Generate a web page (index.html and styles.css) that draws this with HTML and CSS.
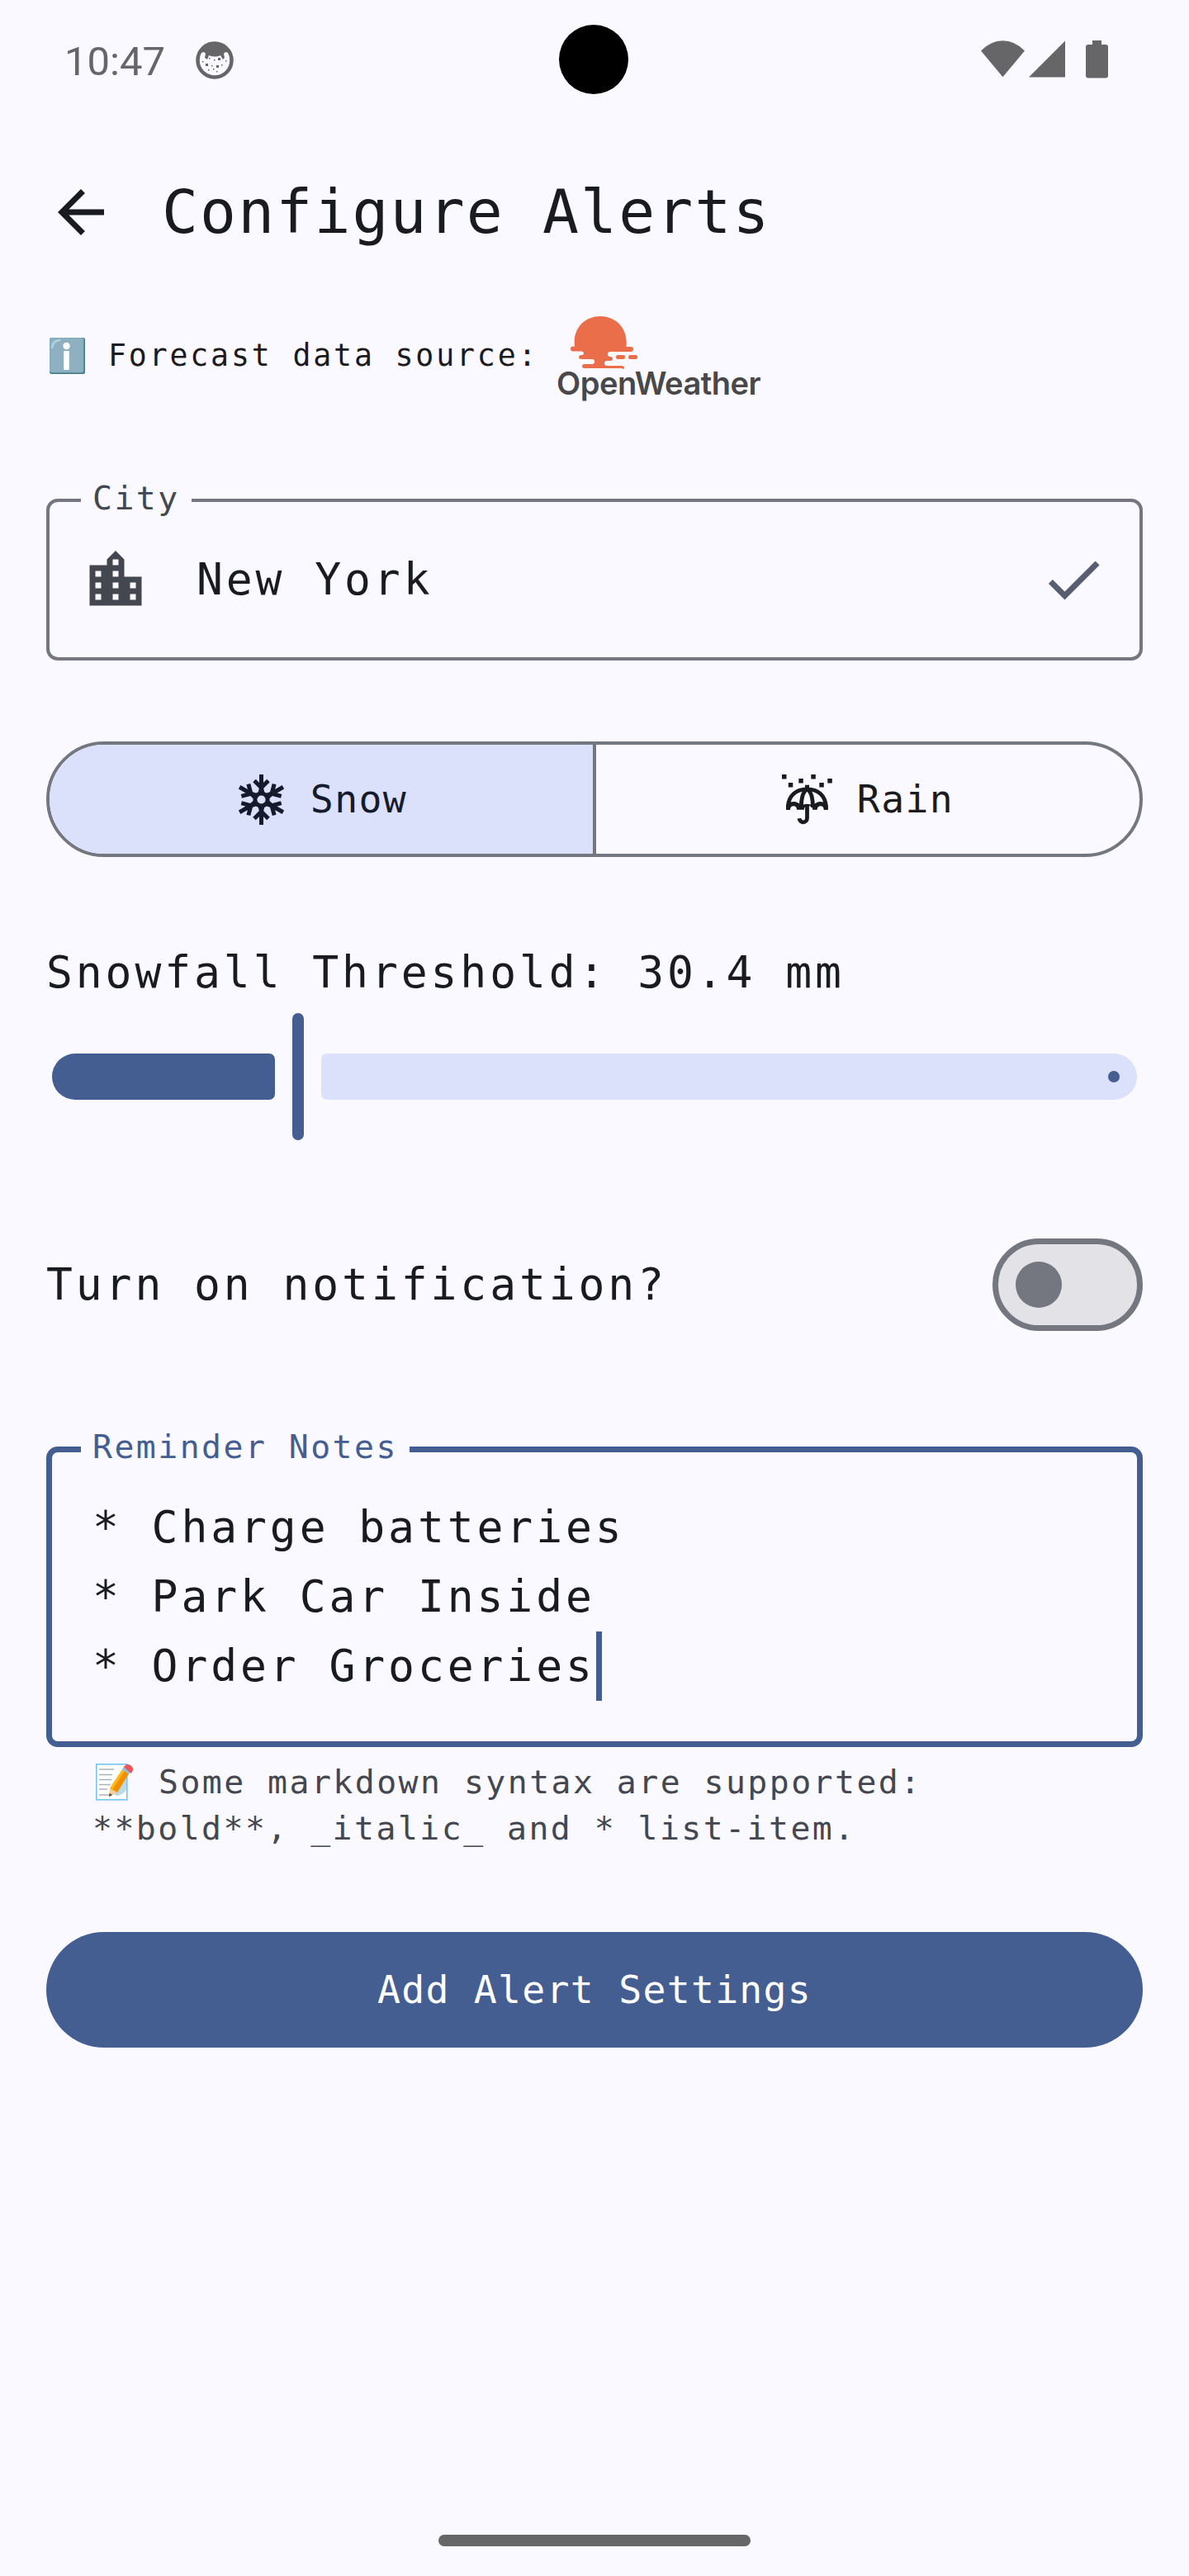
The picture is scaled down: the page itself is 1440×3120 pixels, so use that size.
FILE: index.html
```html
<!DOCTYPE html>
<html lang="en">
<head>
<meta charset="utf-8">
<title>Configure Alerts</title>
<link rel="stylesheet" href="styles.css">
</head>
<body>
<div class="screen">
  <header class="status">
    <span class="clock">10:47</span>
    <svg class="cookie" width="46" height="46" viewBox="0 0 46 46">
      <circle cx="23" cy="23" r="20.5" fill="none" stroke="#666668" stroke-width="4.5"/>
      <path d="M6 14C9 5 15 2 23 2s14 3 17 12l-4-1-2 2 1 5-2 2-3-5c-4 2-10 2-14 0l-2 5-3-2 1-5-2-2z" fill="#666668"/>
      <g fill="#666668"><rect x="12" y="27" width="3" height="3"/><rect x="27" y="20" width="3" height="3"/><rect x="25" y="29" width="3" height="3"/><rect x="8" y="24" width="1.5" height="1.5"/><rect x="16" y="20" width="1.5" height="1.5"/><rect x="22" y="22" width="1.5" height="1.5"/><rect x="19" y="29" width="1.5" height="1.5"/><rect x="31" y="28" width="1.5" height="1.5"/><rect x="36" y="23" width="1.5" height="1.5"/><rect x="15" y="34" width="1.5" height="1.5"/><rect x="21" y="33" width="1.5" height="1.5"/><rect x="25" y="36" width="1.5" height="1.5"/></g>
    </svg>
    <span class="camera"></span>
    <svg class="signals" width="156" height="48" viewBox="0 0 156 48" fill="#666668">
      <path d="M0 12.4Q12 .2 26.5.2T53 12.4L26.5 44.3z"/>
      <path d="M58 44.5L102 .5v44z"/>
      <path d="M135 0h11v5h5q3 0 3 3v34.500q0 3-3 3h-21q-3 0-3-3V8q0-3 3-3h5z"/>
    </svg>
  </header>

  <div class="appbar">
    <svg width="84" height="84" viewBox="0 0 24 24" fill="#1a1b20"><path d="M20 11H7.83l5.590-5.590L12 4l-8 8 8 8 1.410-1.410L7.830 13H20z"/></svg>
    <h1>Configure Alerts</h1>
  </div>

  <main>
    <div class="source">
      <svg class="info" width="43" height="44" viewBox="0 0 43 44">
        <rect width="43" height="44" rx="2.500" fill="#427687"/><rect width="41.500" height="42.500" rx="2.500" fill="#82aebf"/><rect x="1.500" y="1.500" width="38.500" height="39.500" rx="2" fill="#8fb0c0"/>
        <path d="M3 12Q4 4 12 3" stroke="#b2d2e0" stroke-width="2.500" fill="none" stroke-linecap="round"/>
        <circle cx="20.500" cy="10" r="4.200" fill="#fff"/><rect x="17.200" y="16" width="6.600" height="23" rx="1" fill="#fff"/>
      </svg>
      <span class="source-text">Forecast data source:</span>
      <div class="logo">
        <svg width="84" height="66" viewBox="0 0 84 66" fill="#eb6e4b">
          <path d="M6 37C3 14 19 0 37 0s34 14 31.500 37H74q3 0 3 3t-3 3H49q-3 0-3 3t3 3q3 0 3 2.500t-3 2.500h-4q-3 0-3 3t3 3h18q3 0 3 2.500T63 63H18q-3 0-3-2.500t3-2.500h9q3 0 3-3t-3-3H14q-3 0-3-2.500t3-2.500q3 0 3-2t-3-2.500H4q-3 0-3-3t3-3z"/>
          <rect x="56" y="47" width="11" height="5" rx="2"/><rect x="71" y="47" width="11" height="5" rx="2"/>
        </svg>
        <span>OpenWeather</span>
      </div>
    </div>

    <div class="field city">
      <span class="label">City</span>
      <svg width="84" height="84" viewBox="0 0 24 24" fill="#44474f"><path d="M15 11V5l-3-3-3 3v2H3v14h18V11h-6zm-8 8H5v-2h2v2zm0-4H5v-2h2v2zm0-4H5V9h2v2zm6 8h-2v-2h2v2zm0-4h-2v-2h2v2zm0-4h-2V9h2v2zm0-4h-2V5h2v2zm6 12h-2v-2h2v2zm0-4h-2v-2h2v2z"/></svg>
      <span class="value">New York</span>
      <svg width="84" height="84" viewBox="0 0 24 24" fill="#575e71"><path d="M9 16.170L4.830 12l-1.420 1.410L9 19 21 7l-1.410-1.410z"/></svg>
    </div>

    <div class="segments">
      <div class="segment selected">
        <svg width="63" height="63" viewBox="0 0 63 63" fill="none" stroke="#151b2c" stroke-width="5">
          <defs><g id="arm"><path d="M31.500 1v22M23 8.500l8.500 8.500L40 8.500"/><path d="M29 17l-1.500 6.500h8L34 17z" fill="#151b2c" stroke="none"/></g></defs>
          <circle cx="31.500" cy="31.500" r="7.600"/>
          <use href="#arm"/><use href="#arm" transform="rotate(60 31.500 31.500)"/><use href="#arm" transform="rotate(120 31.500 31.500)"/><use href="#arm" transform="rotate(180 31.500 31.500)"/><use href="#arm" transform="rotate(240 31.500 31.500)"/><use href="#arm" transform="rotate(300 31.500 31.500)"/>
        </svg>
        <span>Snow</span>
      </div>
      <div class="segment">
        <svg width="63" height="63" viewBox="0 0 63 63" fill="#1a1b20">
          <path d="M0 1h5.500v5.500H0zM20.300 6h5.500v5.500h-5.500zM35.300 1h5.500v5.500h-5.500zM55.300 6h5.500v5.500h-5.500zM7.800 11h5.500v5.500H7.800zM45.300 11h5.500v5.500h-5.500zM28 13.700h5V18h-5z"/>
          <g fill="none" stroke="#1a1b20" stroke-width="4.800">
            <path d="M7.400 43.700V40C7.800 27 17 18.800 30.400 18.800S53 27 53.300 40v3.700"/>
            <path d="M23.500 41C23 32 25 22 30.400 19 36 22 37.800 32 37.300 41"/>
            <path d="M30.500 37v16.500c0 7-9 7-9.500.8"/>
          </g>
          <path d="M5 43.700V38q4-4 9.500-4 5 0 9 4.500 6.500-3.500 14 0 4-4.500 9-4.500t9.200 4v5.700h-5q0-4.500-4-4.500t-4 4.500h-5.500q0-4.500-4-4.500h-2.500q-3.500 0-4 4.500H18q0-4.500-4-4.500t-4 4.500z"/>
        </svg>
        <span>Rain</span>
      </div>
    </div>

    <div class="threshold">Snowfall Threshold: 30.4 mm</div>
    <div class="slider">
      <span class="active"></span><span class="thumb"></span><span class="rest"><i></i></span>
    </div>

    <div class="notify">
      <span>Turn on notification?</span>
      <span class="switch"><i></i></span>
    </div>

    <div class="field notes">
      <span class="label">Reminder Notes</span>
      <div>* Charge batteries</div>
      <div>* Park Car Inside</div>
      <div class="line">* Order Groceries<span class="caret"></span></div>
    </div>
    <div class="helper">
      <div class="line">
        <svg width="80" height="48" viewBox="0 0 80 48">
          <rect x="4.800" y="2.800" width="37" height="43" fill="#fff" stroke="#75c5f2" stroke-width="1.600"/>
          <path d="M8 9h18M8 15.500h16M8 21.500h15M8 27.500h14M8 33h10M8 40h12" stroke="#a9b4b8" stroke-width="1.400"/>
          <path d="M41 18v16q-4 6-12 7l-6-4z" fill="#b8dcec"/>
          <path d="M20 42l1.500-11L36 9l8 5-14 23z" fill="#fdb713"/>
          <path d="M24.500 33L39 11l5 3-14 23z" fill="#f48f00"/>
          <path d="M20 42l1.300-9.500 8.700 4.500z" fill="#efd0a0"/><path d="M20 42l.6-4 3.500 2z" fill="#444"/>
          <path d="M36 9l2.500-4 8.500 5-3 5z" fill="#8bc4d8"/>
          <path d="M38 6q3-5 8-2 5 4 2 8l-1.500 2z" fill="#f0555c"/>
        </svg><span>Some markdown syntax are supported:</span>
      </div>
      <div>**bold**, _italic_ and * list-item.</div>
    </div>

    <button class="submit">Add Alert Settings</button>
  </main>
  <div class="navbar"></div>
</div>
</body>
</html>
```
FILE: styles.css
```css
* { box-sizing: border-box; }
body { margin: 0; background: #faf9ff; }
.screen {
  width: 1440px; height: 3120px; display: flex; flex-direction: column;
  background: #faf9ff; color: #1a1b20; overflow: hidden;
  font: 53px/84px "DejaVu Sans Mono", monospace; letter-spacing: 3.900px;
  white-space: nowrap;
}
svg { display: block; flex: none; }

.status { height: 145px; display: flex; align-items: center; position: relative; padding: 0 96px 0 78px; }
.clock { font: 49px/58px Roboto, sans-serif; letter-spacing: 0; color: #666668; width: 159px; padding-top: 4px; }
.camera { position: absolute; left: 677px; top: 30px; width: 84px; height: 84px; border-radius: 50%; background: #000; }
.signals { margin-left: auto; }

.appbar { height: 224px; display: flex; align-items: center; padding-left: 56px; gap: 56px; }
h1 { margin: 0; font-size: 73px; line-height: 98px; font-weight: 400; letter-spacing: 2.150px; }

main { display: flex; flex-direction: column; padding: 0 56px; }
.source { height: 124px; display: flex; align-items: center; padding-left: 4px; }
.source-text { font-size: 36.500px; letter-spacing: 2.850px; margin-left: 28px; width: 543px; }
.logo { display: flex; flex-direction: column; height: 104px; }
.logo svg { margin: 4px 0 0 16px; }
.logo span { font: 600 38px/40px Inter, sans-serif; letter-spacing: -0.500px; color: #48484a; margin-top: -5px; }

.field { position: relative; border: 4px solid #74777f; border-radius: 14px; }
.label { position: absolute; left: 38px; top: -33px; padding: 0 14px; background: #faf9ff; font-size: 39.800px; line-height: 56px; letter-spacing: 2.460px; }
.city { height: 196px; margin-top: 111px; display: flex; align-items: center; padding: 0 38px; }
.city .label { color: #44474f; }
.value { margin-left: 56px; flex: 1; }

.segments { margin-top: 98px; height: 140px; border: 4px solid #74777f; border-radius: 70px; display: flex; overflow: hidden; font-size: 46.400px; letter-spacing: 1.400px; }
.segment { flex: 1; display: flex; align-items: center; justify-content: center; gap: 28px; }
.selected { background: #dce1fb; color: #151b2c; border-right: 4px solid #74777f; }

.threshold { margin-top: 98px; }
.slider { margin-top: 7px; height: 154px; display: flex; align-items: center; gap: 21px; padding: 0 7px; }
.active { width: 270px; height: 56px; background: #445e91; border-radius: 28px 7px 7px 28px; }
.thumb { width: 14px; height: 154px; border-radius: 7px; background: #445e91; }
.rest { flex: 1; height: 56px; background: #dce1fb; border-radius: 7px 28px 28px 7px; display: flex; align-items: center; justify-content: flex-end; padding-right: 21px; }
.rest i { width: 14px; height: 14px; border-radius: 50%; background: #445e91; }

.notify { margin-top: 119px; height: 112px; display: flex; align-items: center; justify-content: space-between; }
.switch { width: 182px; height: 112px; border: 7px solid #74777f; border-radius: 56px; background: #e3e2e7; display: flex; align-items: center; padding-left: 21px; }
.switch i { width: 56px; height: 56px; border-radius: 50%; background: #74777f; }

.notes { margin-top: 140px; height: 364px; border: 7px solid #445e91; padding: 49px; }
.notes .label { left: 35px; top: -35px; color: #445e91; }
.line { display: flex; align-items: center; }
.caret { width: 7px; height: 84px; background: #445e91; margin-left: 1px; }
.helper { margin-top: 14px; padding-left: 56px; font-size: 39.800px; line-height: 56px; letter-spacing: 2.460px; color: #44474f; }

.submit { margin-top: 98px; height: 140px; border: 0; border-radius: 70px; background: #445e91; color: #fff; font: 46.400px/84px "DejaVu Sans Mono", monospace; letter-spacing: 1.300px; }
.navbar { width: 378px; height: 14px; border-radius: 7px; background: #666668; margin: auto auto 36px; }
```
